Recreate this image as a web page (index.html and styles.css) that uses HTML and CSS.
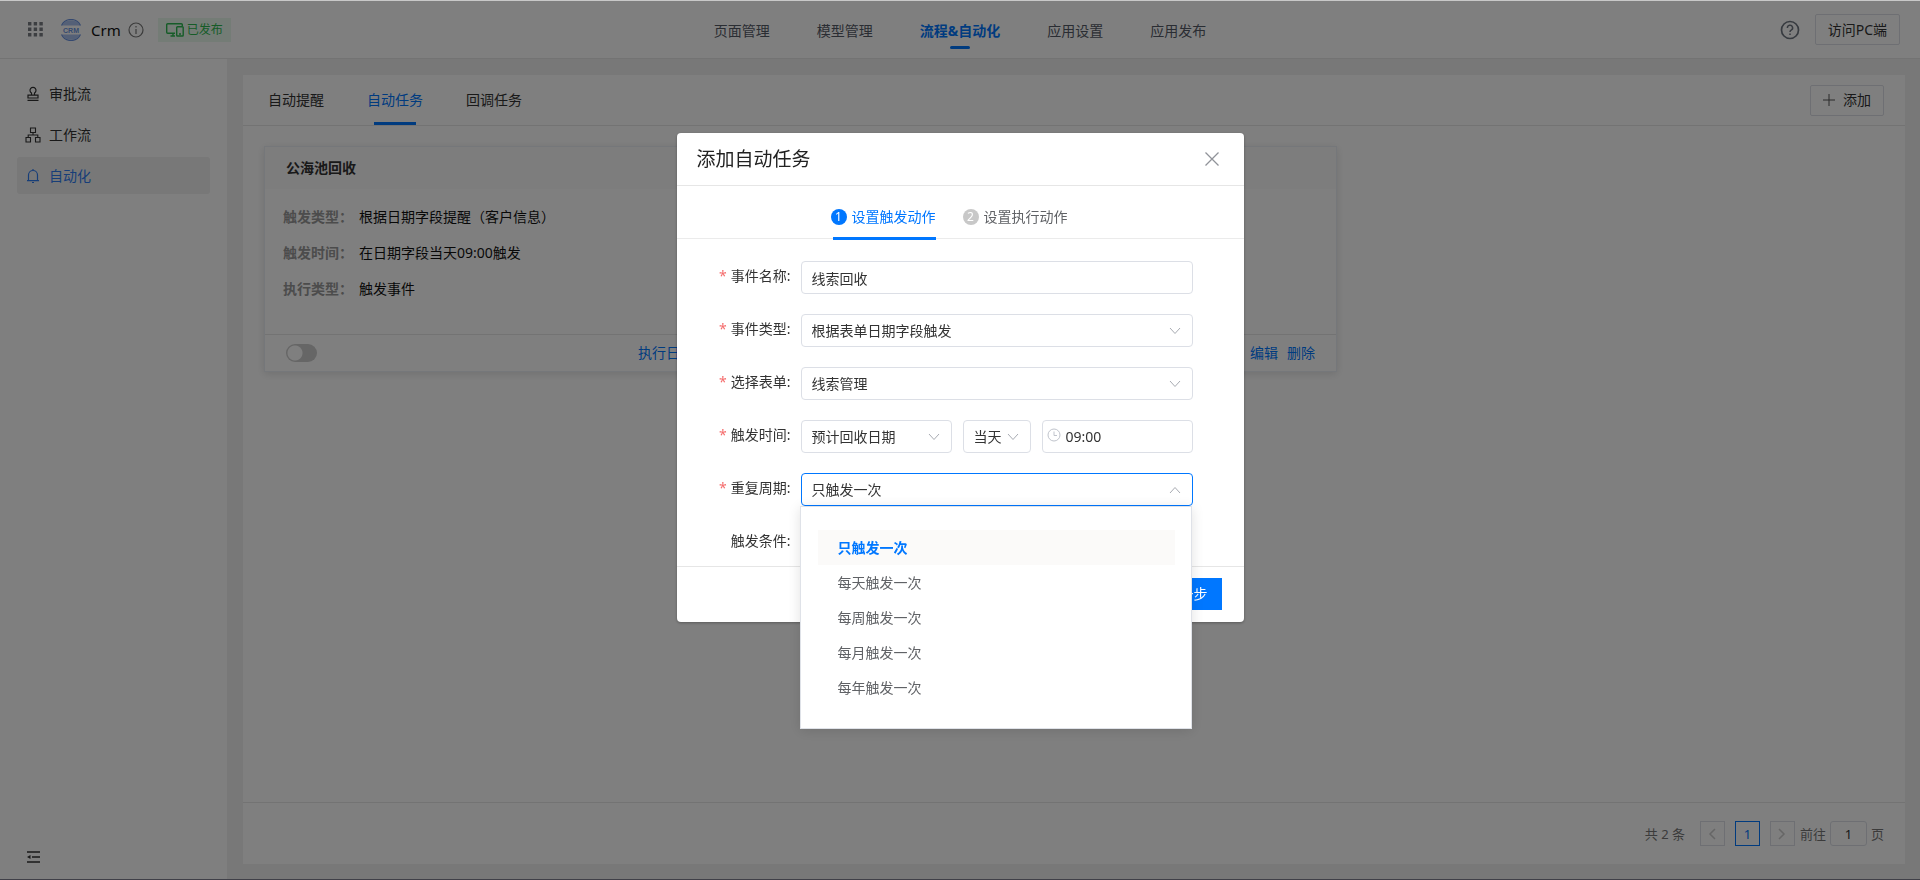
FILE: index.html
```html
<!DOCTYPE html>
<html lang="zh-CN">
<head>
<meta charset="utf-8">
<title>Crm</title>
<link rel="stylesheet" href="styles.css">
</head>
<body>
<div class="app">
  <header class="topbar">
    <div class="brand">
      <svg class="apps-icon" width="15" height="15" viewBox="0 0 15 15" fill="#7b7e85"><path d="M0 0h3.400v3.400H0zM5.700 0h3.400v3.400H5.700zM11.400 0h3.400v3.400h-3.400zM0 5.500h3.400v3.400H0zM5.700 5.500h3.400v3.400H5.700zM11.400 5.500h3.400v3.400h-3.400zM0 11h3.400v3.400H0zM5.700 11h3.400v3.400H5.700zM11.400 11h3.400v3.400h-3.400z"/></svg>
      <svg class="logo" width="22" height="22" viewBox="0 0 22 22"><path d="M2 6.500A10.300 10.300 0 0 1 20 6.500zM2 15.500A10.300 10.300 0 0 0 20 15.500z" fill="#a9c0ee"/><path d="M1.500 6.500A10.500 10.500 0 0 1 20.500 6.500M1.500 15.500A10.500 10.500 0 0 0 20.500 15.500" fill="none" stroke="#6a93e0" stroke-width="1.200"/><text x="11" y="13.500" text-anchor="middle" class="logo-text">CRM</text></svg>
      <span class="brand-name">Crm</span>
      <svg class="info" width="16" height="16" viewBox="0 0 16 16" fill="none" stroke="#777" stroke-width="1.200"><circle cx="8" cy="8" r="7"/><path d="M8 7v5M8 4v1.500"/></svg>
      <span class="status">
        <svg width="18" height="14" viewBox="0 0 18 14" fill="none" stroke="#2cb850" stroke-width="1.400"><path d="M16.300 3V1.700a1 1 0 0 0-1-1H1.700a1 1 0 0 0-1 1v7.600a1 1 0 0 0 1 1H9M4.500 13H9M7 10.500V13"/><rect x="10.700" y="3.700" width="6.500" height="9.300" rx=".8"/><path d="M13 11h2"/></svg>已发布</span>
    </div>
    <nav class="nav">
      <a href="#">页面管理</a>
      <a href="#">模型管理</a>
      <a href="#" class="active">流程&amp;自动化</a>
      <a href="#">应用设置</a>
      <a href="#">应用发布</a>
    </nav>
    <div class="top-actions">
      <svg width="20" height="20" viewBox="0 0 20 20" fill="none" stroke="#6f7681" stroke-width="1.700"><circle cx="10" cy="10" r="8.500"/><path d="M7.400 8a2.600 2.600 0 1 1 3.800 2.200c-.9.500-1.200.9-1.200 1.800M10 13.500v1.500" stroke-width="1.500"/></svg>
      <button class="btn" type="button">访问PC端</button>
    </div>
  </header>
  <div class="shell">
    <aside class="sidebar">
      <nav class="menu">
        <a href="#"><svg width="16" height="16" viewBox="0 0 16 16" fill="none" stroke="currentColor" stroke-width="1.200"><path d="M6.500 9.200V7A3 3 0 1 1 9.500 7v2.200M3 12V9.200h10V12zM2.500 14.400h11"/></svg>审批流</a>
        <a href="#"><svg width="16" height="16" viewBox="0 0 16 16" fill="none" stroke="currentColor" stroke-width="1.100"><path d="M5.500 1h5v4.500h-5zM1 10.500h4.500V15H1zM10.500 10.500H15V15h-4.500zM8 5.500V8M3.200 10.500V8h9.600v2.500"/></svg>工作流</a>
        <a href="#" class="active"><svg width="16" height="16" viewBox="0 0 16 16" fill="none" stroke="currentColor" stroke-width="1.200"><path d="M8 1v1.500M3.500 12.500V7a4.500 4.500 0 0 1 9 0v5.500M2 12.700h12M7 14.500h2"/></svg>自动化</a>
      </nav>
      <button class="collapse" type="button" aria-label="收起"><svg width="14" height="12" viewBox="0 0 14 12"><path d="M0 1h13M5 6h8M0 11h13" stroke="#333" stroke-width="1.500"/><path d="M0 6l3.500-2v4z" fill="#333"/></svg></button>
    </aside>
    <main class="panel">
      <div class="tabs">
        <a href="#">自动提醒</a>
        <a href="#" class="active">自动任务</a>
        <a href="#">回调任务</a>
        <button class="btn add" type="button"><svg width="12" height="12" viewBox="0 0 12 12" stroke="#555"><path d="M6 0v12M0 6h12"/></svg>添加</button>
      </div>
      <div class="cards">
        <article class="card">
          <h2 class="card-title">公海池回收</h2>
          <dl class="facts">
            <dt>触发类型：</dt><dd>根据日期字段提醒（客户信息）</dd>
            <dt>触发时间：</dt><dd>在日期字段当天09:00触发</dd>
            <dt>执行类型：</dt><dd>触发事件</dd>
          </dl>
          <footer class="card-foot">
            <input class="switch" type="checkbox" aria-label="启用">
            <a href="#">执行日志</a><a href="#">编辑</a><a href="#">删除</a>
          </footer>
        </article>
        <article class="card">
          <div class="card-title"></div>
          <div class="facts"></div>
          <footer class="card-foot">
            <input class="switch" type="checkbox" aria-label="启用">
            <a href="#">编辑</a><a href="#">删除</a>
          </footer>
        </article>
      </div>
      <div class="pager">
        <span class="total">共 2 条</span>
        <button type="button" class="page" aria-label="上一页"><svg width="8" height="12" viewBox="0 0 8 12" fill="none" stroke="#ccc" stroke-width="1.500"><path d="M7 1L2 6l5 5"/></svg></button>
        <button type="button" class="page current">1</button>
        <button type="button" class="page" aria-label="下一页"><svg width="8" height="12" viewBox="0 0 8 12" fill="none" stroke="#ccc" stroke-width="1.500"><path d="M1 1l5 5-5 5"/></svg></button>
        <label class="jump">前往<input type="text" value="1">页</label>
      </div>
    </main>
  </div>
</div>

<div class="overlay">
  <form class="modal" role="dialog" aria-labelledby="dialog-title">
    <header class="modal-head">
      <h1 id="dialog-title">添加自动任务</h1>
      <button type="button" class="close" aria-label="关闭"><svg width="14" height="14" viewBox="0 0 14 14" stroke="#909399" stroke-width="1.300"><path d="M.5.500l13 13M13.500.500l-13 13"/></svg></button>
    </header>
    <div class="steps">
      <a href="#" class="step active"><span class="num">1</span>设置触发动作</a>
      <a href="#" class="step"><span class="num">2</span>设置执行动作</a>
    </div>
    <div class="fields">
      <label class="required" for="name">事件名称:</label>
      <input id="name" class="control" type="text" value="线索回收">

      <label class="required" for="type">事件类型:</label>
      <div class="pick"><select id="type" class="control"><option>根据表单日期字段触发</option></select><svg class="chevron" viewBox="0 0 12 8"><path d="M1 1l5 5.500L11 1"/></svg></div>

      <label class="required" for="sheet">选择表单:</label>
      <div class="pick"><select id="sheet" class="control"><option>线索管理</option></select><svg class="chevron" viewBox="0 0 12 8"><path d="M1 1l5 5.500L11 1"/></svg></div>

      <label class="required" for="date">触发时间:</label>
      <div class="when">
        <div class="pick"><select id="date" class="control"><option>预计回收日期</option></select><svg class="chevron" viewBox="0 0 12 8"><path d="M1 1l5 5.500L11 1"/></svg></div>
        <div class="pick"><select class="control" aria-label="偏移"><option>当天</option></select><svg class="chevron" viewBox="0 0 12 8"><path d="M1 1l5 5.500L11 1"/></svg></div>
        <div class="pick time"><svg class="clock" viewBox="0 0 14 14"><circle cx="7" cy="7" r="6"/><path d="M7 3.500V7.500H10"/></svg><input class="control" type="text" value="09:00" aria-label="时间"></div>
      </div>

      <label class="required" for="cycle">重复周期:</label>
      <div class="pick open"><select id="cycle" class="control"><option>只触发一次</option></select><svg class="chevron" viewBox="0 0 12 8"><path d="M1 7l5-5.500L11 7"/></svg>
        <ul class="options" role="listbox">
          <li role="option" aria-selected="true">只触发一次</li>
          <li role="option">每天触发一次</li>
          <li role="option">每周触发一次</li>
          <li role="option">每月触发一次</li>
          <li role="option">每年触发一次</li>
        </ul>
      </div>

      <span class="label">触发条件:</span>
    </div>
    <footer class="modal-foot"><button type="button" class="primary">下一步</button></footer>
  </form>
</div>
</body>
</html>
```
FILE: styles.css
```css
* { box-sizing: border-box; }
body {
  margin: 0;
  font: 14px/20px "Noto Sans", "Noto Sans CJK SC", sans-serif;
  color: #333;
}
a { color: inherit; text-decoration: none; }
button, input, select { font: inherit; color: inherit; }
button { cursor: pointer; }
svg { flex: none; }
h1, h2, dl, dd, ul { margin: 0; padding: 0; }

.app {
  display: flex;
  flex-direction: column;
  height: 100vh;
  border-top: 1px solid #c8c8c8;
  border-bottom: 1px solid #808090;
  background: #f0f0f0;
}
.topbar {
  display: grid;
  grid-template-columns: 1fr auto 1fr;
  align-items: center;
  height: 58px;
  padding: 0 20px;
  background: #fff;
  border-bottom: 1px solid #e6e6e6;
}
.brand { display: flex; align-items: center; padding-left: 8px; }
.logo { margin-left: 17px; }
.logo-text { font: bold 7px "Liberation Sans", sans-serif; fill: #6a93e0; }
.brand-name { margin-left: 9px; font-size: 15px; color: #111; }
.info { margin-left: 7px; }
.status {
  display: flex;
  align-items: center;
  gap: 3px;
  height: 24px;
  margin-left: 14px;
  padding: 0 8px;
  font-size: 12px;
  color: #2cb850;
  background: #e8f8ec;
}
.nav { display: flex; gap: 47px; }
.nav a { display: flex; flex-direction: column; align-items: center; padding-top: 2px; color: #555a66; }
.nav .active { position: relative; font-weight: bold; color: #07f; }
.nav .active::after {
  content: "";
  position: absolute;
  top: 27px;
  width: 20px;
  height: 3px;
  border-radius: 2px;
  background: #07f;
}
.top-actions { display: flex; align-items: center; justify-content: flex-end; gap: 15px; }
.btn {
  display: flex;
  align-items: center;
  height: 31px;
  padding: 0 12px;
  border: 1px solid #dcdfe6;
  border-radius: 2px;
  background: #fff;
}

.shell { display: flex; flex: 1; min-height: 0; }
.sidebar {
  display: flex;
  flex-direction: column;
  justify-content: space-between;
  width: 227px;
  padding: 16px 17px;
  background: #fff;
}
.menu { display: flex; flex-direction: column; gap: 4px; }
.menu a {
  display: flex;
  align-items: center;
  gap: 8px;
  height: 37px;
  padding-left: 8px;
  border-radius: 3px;
}
.menu .active { color: #2f7cf0; background: #f0f0f0; }
.collapse { display: flex; width: 24px; margin-left: 10px; padding: 0; border: 0; background: none; }

.panel {
  display: flex;
  flex: 1;
  flex-direction: column;
  margin: 16px 15px 15px 16px;
  background: #fff;
}
.tabs {
  display: flex;
  align-items: center;
  gap: 43px;
  height: 51px;
  padding: 0 21px 0 25px;
  border-bottom: 1px solid #e6e6e6;
}
.tabs a { position: relative; }
.tabs .active { color: #07f; }
.tabs .active::after {
  content: "";
  position: absolute;
  left: 7px;
  right: 7px;
  bottom: -15px;
  height: 3px;
  background: #07f;
}
.add { gap: 8px; margin-left: auto; }
.cards {
  display: grid;
  flex: 1;
  grid-template-columns: repeat(3, 1fr);
  align-content: start;
  gap: 21px;
  padding: 20px 21px;
}
.card { border: 1px solid #ebeef5; box-shadow: 0 2px 8px rgba(0, 0, 0, .12); }
.card-title {
  height: 42px;
  padding: 0 21px;
  font-size: 14px;
  line-height: 42px;
  background: #fafafa;
}
.facts {
  display: grid;
  grid-template-columns: 70px 1fr;
  align-content: start;
  gap: 16px 6px;
  height: 145px;
  padding: 18px;
}
.facts dt { font-weight: bold; color: #999; white-space: nowrap; }
.facts dd { color: #111; }
.card-foot {
  display: flex;
  align-items: center;
  gap: 9px;
  height: 37px;
  padding: 0 21px;
  border-top: 1px solid #e6e6e6;
  color: #07f;
}
.switch {
  width: 31px;
  height: 18px;
  margin: 0 auto 0 0;
  border-radius: 9px;
  appearance: none;
  background: radial-gradient(circle at 9px 9px, #fff 7px, #ccc 8px);
}
.pager {
  display: flex;
  align-items: center;
  justify-content: flex-end;
  gap: 10px;
  height: 62px;
  padding: 0 21px;
  border-top: 1px solid #e6e6e6;
  font-size: 13px;
  color: #777;
}
.page {
  display: flex;
  align-items: center;
  justify-content: center;
  width: 25px;
  height: 25px;
  padding: 0;
  border: 1px solid #dcdfe6;
  background: #fff;
}
.total { margin-right: 5px; }
.current { border-color: #07f; color: #07f; }
.jump { display: flex; align-items: center; gap: 4px; margin-left: -5px; }
.jump input {
  width: 37px;
  height: 25px;
  padding: 0;
  border: 1px solid #dcdfe6;
  border-radius: 3px;
  text-align: center;
  color: #333;
}

.overlay {
  position: fixed;
  inset: 1px 0 0;
  display: flex;
  align-items: flex-start;
  justify-content: center;
  background: rgba(0, 0, 0, .5);
}
.modal {
  width: 567px;
  margin-top: 15vh;
  border-radius: 4px;
  background: #fff;
  box-shadow: 0 1px 3px rgba(0, 0, 0, .3);
}
.modal-head {
  display: flex;
  align-items: center;
  justify-content: space-between;
  height: 53px;
  padding: 0 25px 0 20px;
  border-bottom: 1px solid #e6e6e6;
}
.modal-head h1 { font-size: 19px; font-weight: normal; color: #222; }
.close { display: flex; padding: 0; border: 0; background: none; }
.steps {
  display: flex;
  justify-content: center;
  gap: 27px;
  height: 53px;
  padding: 10px 22px 0 0;
  border-bottom: 1px solid #ebebeb;
}
.step { display: flex; align-items: center; gap: 5px; color: #606266; }
.step.active { position: relative; color: #07f; }
.step.active::after {
  content: "";
  position: absolute;
  right: 0;
  bottom: -2px;
  left: 2px;
  height: 3px;
  background: #07f;
}
.num {
  width: 16px;
  height: 16px;
  border-radius: 8px;
  font-size: 12px;
  line-height: 16px;
  text-align: center;
  color: #fff;
  background: #c8c8c8;
}
.active .num { background: #07f; }
.fields {
  display: grid;
  grid-template-columns: 72px 1fr;
  grid-auto-rows: 33px;
  gap: 20px 10px;
  padding: 22px 51px 7px 42px;
}
.fields label, .label { line-height: 30px; text-align: right; white-space: nowrap; }
.required::before { content: "*"; margin-right: 4px; color: #f56c6c; }
.control {
  width: 100%;
  height: 33px;
  padding: 0 10px;
  border: 1px solid #dcdfe6;
  border-radius: 4px;
  outline: 0;
  appearance: none;
  background: #fff;
}
.pick { position: relative; }
.chevron, .clock { position: absolute; fill: none; pointer-events: none; }
.chevron { top: 13px; right: 12px; width: 12px; height: 8px; stroke: #a8abb2; }
.when { display: grid; grid-template-columns: 151px 68px 1fr; gap: 11px; }
.clock { top: 8px; left: 5px; width: 14px; height: 14px; stroke: #c0c4cc; }
.time .control { padding-left: 23px; }
.open .control { border-color: #07f; }
.options {
  position: absolute;
  top: 33px;
  right: 1px;
  left: -1px;
  z-index: 1;
  padding: 23px 16px 23px 17px;
  border: 1px solid #dfe2e8;
  list-style: none;
  background: #fff;
  box-shadow: 0 2px 12px rgba(0, 0, 0, .12);
}
.options li { padding: 0 20px; line-height: 35px; color: #606266; }
.options [aria-selected] { font-weight: bold; color: #07f; background: #fbfaf9; }
.modal-foot {
  display: flex;
  justify-content: flex-end;
  padding: 11px 22px 12px;
  border-top: 1px solid #e6e6e6;
}
.primary { height: 32px; padding: 0 14px; border: 0; color: #fff; background: #07f; }
```
